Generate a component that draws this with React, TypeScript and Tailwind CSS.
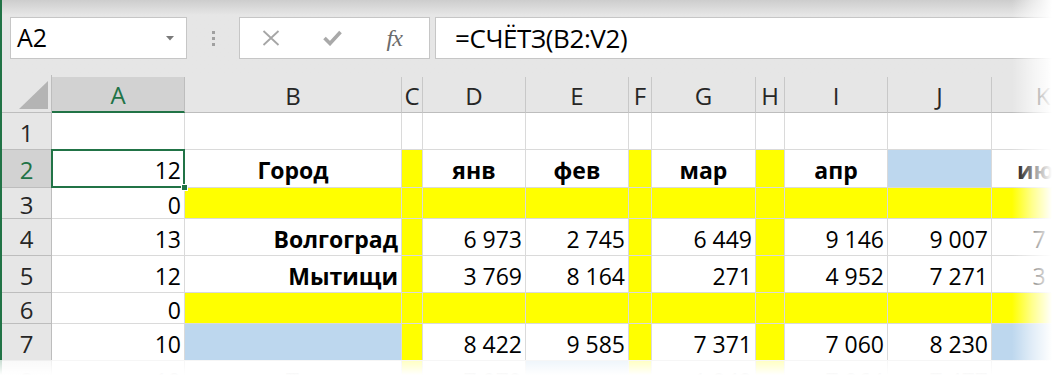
import React from "react";

type Cell = { t?: string; b?: boolean; c?: boolean };

const cols = ["A", "B", "C", "D", "E", "F", "G", "H", "I", "J", "K"];
const yellowCols = ["C", "F", "H"];

const YELLOW = "bg-[#ffff00]";
const BLUE = "bg-[#bdd7ee]";

// row heights follow the sheet (yellow spacer rows are shorter)
const rows: { n: number; cells: Record<string, Cell>; blue?: string[]; band?: boolean }[] = [
  { n: 1, cells: {} },
  {
    n: 2,
    cells: {
      A: { t: "12" },
      B: { t: "Город", b: true, c: true },
      D: { t: "янв", b: true, c: true },
      E: { t: "фев", b: true, c: true },
      G: { t: "мар", b: true, c: true },
      I: { t: "апр", b: true, c: true },
      K: { t: "июн", b: true, c: true },
    },
    blue: ["J"],
  },
  { n: 3, cells: { A: { t: "0" } }, band: true },
  {
    n: 4,
    cells: {
      A: { t: "13" },
      B: { t: "Волгоград", b: true },
      D: { t: "6 973" },
      E: { t: "2 745" },
      G: { t: "6 449" },
      I: { t: "9 146" },
      J: { t: "9 007" },
      K: { t: "7 462" },
    },
  },
  {
    n: 5,
    cells: {
      A: { t: "12" },
      B: { t: "Мытищи", b: true },
      D: { t: "3 769" },
      E: { t: "8 164" },
      G: { t: "271" },
      I: { t: "4 952" },
      J: { t: "7 271" },
      K: { t: "3 118" },
    },
  },
  { n: 6, cells: { A: { t: "0" } }, band: true },
  {
    n: 7,
    cells: {
      A: { t: "10" },
      D: { t: "8 422" },
      E: { t: "9 585" },
      G: { t: "7 371" },
      I: { t: "7 060" },
      J: { t: "8 230" },
    },
    blue: ["B", "K"],
  },
  {
    n: 8,
    cells: {
      A: { t: "10" },
      B: { t: "Тольятти", b: true },
      D: { t: "7 079" },
      G: { t: "1 949" },
      I: { t: "7 064" },
      J: { t: "7 477" },
    },
    blue: ["E"],
  },
];

function cellBg(r: (typeof rows)[number], col: string) {
  if (r.blue?.includes(col)) return BLUE;
  if (r.band && col !== "A") return YELLOW;
  if (r.n >= 2 && yellowCols.includes(col)) return YELLOW;
  return "bg-white";
}

function FormulaBar() {
  return (
    <div className="shrink-0 h-[75px] bg-gradient-to-b from-[#cdcdcd] via-[#e6e6e6] via-[20%] to-[#e6e6e6] flex items-start pt-[17px] pl-[8px]">
      <div className="w-[177px] h-[42px] bg-white border border-[#c6c6c6] flex items-center justify-between pl-[6px] pr-[12px]">
        <span className="text-[25px] text-black font-['Open_Sans']">A2</span>
        <svg width="8" height="5" viewBox="0 0 8 5">
          <path d="M0 0 L8 0 L4 4.5 Z" fill="#7a7a7a" />
        </svg>
      </div>
      <div className="w-[52px] h-[42px] flex flex-col items-center justify-center gap-[3px]">
        <span className="w-[3px] h-[3px] bg-[#a0a0a0]" />
        <span className="w-[3px] h-[3px] bg-[#a0a0a0]" />
        <span className="w-[3px] h-[3px] bg-[#a0a0a0]" />
      </div>
      <div className="w-[191px] h-[42px] bg-white border border-[#c6c6c6] grid grid-cols-3 items-center justify-items-center pr-[4px]">
        <svg width="18" height="16" viewBox="0 0 18 16">
          <path d="M1.5 1 L16.5 15 M16.5 1 L1.5 15" stroke="#a6a6a6" strokeWidth="1.8" fill="none" />
        </svg>
        <svg width="19" height="16" viewBox="0 0 19 16">
          <path d="M1.5 8 L7 13.5 L17.5 2" stroke="#a9a9a9" strokeWidth="3.6" fill="none" />
        </svg>
        <span className="text-[24px] italic text-[#6b6b6b] font-['Liberation_Serif'] leading-none tracking-[-1px]">
          fx
        </span>
      </div>
      <div className="ml-[5px] flex-1 h-[42px] bg-white border border-r-0 border-[#c6c6c6] flex items-center pl-[19px]">
        <span className="text-[26px] text-black font-['Open_Sans'] tracking-[-0.4px]">=СЧЁТЗ(B2:V2)</span>
      </div>
    </div>
  );
}

function Sheet() {
  return (
    <div className="shrink-0 grid grid-cols-[50px_133px_217px_21px_103px_103px_23px_104px_29px_103px_104px_103px] grid-rows-[38px_37px_38px_31px_37px_37px_31px_37px_37px] bg-[#e6e6e6] text-[23px] font-['Open_Sans'] leading-none">
      {/* corner */}
      <div className="border-r border-b border-[#bdbdbd] flex items-end justify-end pr-[3px] pb-[3px] pt-[2px]">
        <svg width="29" height="28" viewBox="0 0 29 28">
          <path d="M0 28 L29 0 L29 28 Z" fill="#b4b4b4" />
        </svg>
      </div>
      {cols.map((c) =>
        c === "A" ? (
          <div
            key={c}
            className="mt-[2px] bg-[#d2d2d2] border-r border-[#bdbdbd] border-b-2 border-b-[#217346] flex items-center justify-center text-[24px] text-[#217346] pt-[2px]"
          >
            {c}
          </div>
        ) : (
          <div
            key={c}
            className="mt-[2px] border-r border-b border-[#c8c8c8] border-b-[#bdbdbd] flex items-center justify-center text-[24px] text-[#262626] pt-[2px]"
          >
            {c}
          </div>
        ),
      )}
      {rows.map((r) => (
        <React.Fragment key={r.n}>
          <div
            className={`border-r border-b border-[#bdbdbd] flex items-center justify-center text-[24px] pt-[3px] ${
              r.n === 2 ? "bg-[#d2d2d2] text-[#217346]" : "text-[#262626]"
            }`}
          >
            {r.n}
          </div>
          {cols.map((c) => {
            const cell = r.cells[c];
            const sel = r.n === 2 && c === "A";
            return (
              <div
                key={c}
                className={`relative border-r border-b border-[#dadada] flex items-center pt-[4px] whitespace-nowrap overflow-visible text-black ${cellBg(
                  r,
                  c,
                )} ${cell?.c ? "justify-center" : "justify-end pr-[3px]"} ${cell?.b ? "font-bold" : ""} ${sel ? "z-10" : ""}`}
              >
                {cell?.t}
                {sel && (
                  <>
                    <div className="absolute -left-[1px] -top-[1px] -right-[1px] -bottom-[1px] border-2 border-[#217346]" />
                    <div className="absolute -right-[4px] -bottom-[4px] w-[7px] h-[7px] bg-[#217346] border border-white" />
                  </>
                )}
              </div>
            );
          })}
        </React.Fragment>
      ))}
    </div>
  );
}

export default function App() {
  return (
    <div className="relative w-[1052px] h-[375px] overflow-hidden bg-white">
      <div className="flex h-full">
        <div className="w-[2px] shrink-0 bg-[#217346]" />
        <div className="flex-1 min-w-0 flex flex-col">
          <FormulaBar />
          <Sheet />
        </div>
      </div>
      {/* torn-edge fades of the screenshot */}
      <div className="absolute top-0 right-0 bottom-0 w-[40px] bg-gradient-to-r from-white/0 via-white/55 to-white" />
      <div className="absolute left-0 right-0 bottom-0 h-[15px] bg-gradient-to-b from-white/75 to-white" />
    </div>
  );
}
